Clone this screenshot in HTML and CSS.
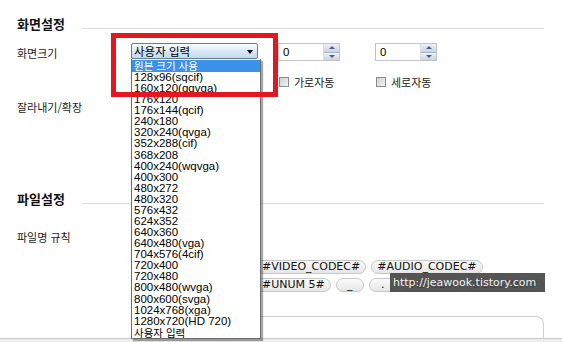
FILE: index.html
```html
<!DOCTYPE html>
<html lang="ko">
<head>
<meta charset="utf-8">
<title>화면설정</title>
<link rel="stylesheet" href="styles.css">
</head>
<body>
<div class="page">
  <section class="sec sec-screen">
    <div class="sec-head"><h2 class="sec-title">화면설정</h2><div class="sec-line"></div></div>
    <div class="row row-size">
      <div class="lbl">화면크기</div>
      <div class="size-controls">
        <div class="select-wrap">
          <div class="select"><span class="select-text">사용자 입력</span><span class="select-arrow"></span></div>
          <ul class="dropdown">
            <li class="opt ko sel">원본 크기 사용</li>
            <li class="opt">128x96(sqcif)</li>
            <li class="opt">160x120(qqvga)</li>
            <li class="opt">176x120</li>
            <li class="opt">176x144(qcif)</li>
            <li class="opt">240x180</li>
            <li class="opt">320x240(qvga)</li>
            <li class="opt">352x288(cif)</li>
            <li class="opt">368x208</li>
            <li class="opt">400x240(wqvga)</li>
            <li class="opt">400x300</li>
            <li class="opt">480x272</li>
            <li class="opt">480x320</li>
            <li class="opt">576x432</li>
            <li class="opt">624x352</li>
            <li class="opt">640x360</li>
            <li class="opt">640x480(vga)</li>
            <li class="opt">704x576(4cif)</li>
            <li class="opt">720x400</li>
            <li class="opt">720x480</li>
            <li class="opt">800x480(wvga)</li>
            <li class="opt">800x600(svga)</li>
            <li class="opt">1024x768(xga)</li>
            <li class="opt">1280x720(HD 720)</li>
            <li class="opt ko">사용자 입력</li>
          </ul>
        </div>
        <div class="fields">
          <div class="spins">
            <div class="spin"><span class="spin-val">0</span><span class="spin-btn"><i class="up"></i><i class="down"></i></span></div>
            <div class="spin spin-2"><span class="spin-val">0</span><span class="spin-btn"><i class="up"></i><i class="down"></i></span></div>
          </div>
          <div class="checks">
            <label class="check"><span class="box"></span>가로자동</label>
            <label class="check"><span class="box"></span>세로자동</label>
          </div>
        </div>
        <div class="highlight-frame"></div>
      </div>
    </div>
    <div class="row row-crop">
      <div class="lbl">잘라내기/확장</div>
    </div>
  </section>
  <section class="sec sec-file">
    <div class="sec-head"><h2 class="sec-title">파일설정</h2><div class="sec-line"></div></div>
    <div class="row row-name">
      <div class="lbl">파일명 규칙</div>
    </div>
    <div class="chips">
      <div class="chip-row">
        <span class="chip">#VIDEO_CODEC#</span>
        <span class="chip">#AUDIO_CODEC#</span>
      </div>
      <div class="chip-row">
        <span class="chip">#UNUM 5#</span>
        <span class="chip chip-wide">_</span>
        <span class="chip chip-wide">.</span>
        <span class="chip">#DATE#</span>
        <span class="chip">#CUSTOM#</span>
      </div>
      <div class="watermark">http://jeawook.tistory.com</div>
    </div>
    <div class="name-box"></div>
  </section>
</div>
<div class="footer-bar"></div>
</body>
</html>
```
FILE: styles.css
```css
* { box-sizing: border-box; margin: 0; padding: 0; }
html, body { width: 562px; height: 342px; overflow: hidden; }
body {
  background: #fff;
  font-family: "Noto Sans CJK KR", sans-serif;
  font-size: 11px;
  color: #1a1a1a;
  display: grid;
  grid-template-rows: 338px 4px;
}
.page { padding: 17px 19px 0 17px; position: relative; z-index: 1; min-height: 0; }

.sec-head { display: flex; height: 14px; line-height: 14px; }
.sec-title { font-size: 13px; font-weight: bold; width: 65px; color: #111; }
.sec-line { flex: 1; height: 1px; background: #dedede; margin-top: 11px; }

.row { display: flex; }
.lbl { width: 114px; line-height: 14px; }

.row-size { margin-top: 12px; }
.row-size .lbl { padding-top: 3px; }
.size-controls { position: relative; display: flex; }

.select-wrap { position: relative; width: 127px; }
.select {
  height: 16px;
  border: 1px solid #5f7f9e;
  border-radius: 2px;
  background: linear-gradient(#fafdff, #d6e7f5 55%, #c3dbef);
  display: flex;
  align-items: center;
  padding-left: 2px;
}
.select-text { flex: 1; font-size: 11.5px; line-height: 14px; color: #000; }
.select-arrow {
  width: 0; height: 0;
  border-left: 3.5px solid transparent;
  border-right: 3.5px solid transparent;
  border-top: 4px solid #111;
  margin-right: 4px;
  margin-top: 1px;
}
.dropdown {
  position: absolute;
  top: 16px;
  left: 0;
  width: 130px;
  height: 280px;
  list-style: none;
  background: #fff;
  border: 1px solid #6d6d6d;
  border-top: none;
  box-shadow: 2px 2px 1px rgba(0,0,0,0.35);
  padding-top: 1px;
  z-index: 2;
  font-family: "Liberation Sans", "Noto Sans CJK KR", sans-serif;
  font-size: 11.5px;
  color: #000;
}
.opt { height: 11.08px; line-height: 11.08px; padding-left: 2px; white-space: nowrap; }
.opt.ko { font-family: "Noto Sans CJK KR", sans-serif; font-size: 10.5px; }
.opt.sel { height: 12px; line-height: 12px; background: #3a92ea; color: #fff; }

.fields { margin-left: 20px; }
.spins { display: flex; }
.spin {
  width: 62px; height: 18px;
  border: 1px solid #c3c3c3;
  display: flex;
  align-items: center;
  justify-content: space-between;
  background: #fff;
}
.spin-2 { margin-left: 35px; }
.spin-val { padding-left: 4px; font-family: "Liberation Sans", sans-serif; font-size: 11.5px; color: #000; }
.spin-btn {
  width: 16px; height: 16px;
  display: flex; flex-direction: column;
  border-left: 1px solid #d8dde6;
}
.spin-btn i {
  flex: 1;
  display: flex; align-items: center; justify-content: center;
  background: linear-gradient(#eef2f8, #c9d3e3);
}
.spin-btn i.down { border-top: 1px solid #a9b4c8; }
.spin-btn i::before {
  content: "";
  width: 0; height: 0;
  border-left: 3px solid transparent;
  border-right: 3px solid transparent;
}
.spin-btn i.up::before { border-bottom: 3px solid #4d5d84; }
.spin-btn i.down::before { border-top: 3px solid #4d5d84; }

.checks { display: flex; margin-top: 14px; height: 14px; align-items: center; }
.check { display: flex; align-items: center; width: 97px; line-height: 14px; color: #1a1a1a; }
.check .box {
  width: 10px; height: 10px;
  border: 1px solid #8c8c8c;
  background: linear-gradient(135deg, #cfcfcf, #f4f4f4);
  margin-left: 1px;
  margin-right: 5px;
}

.highlight-frame {
  position: absolute;
  left: -20px; top: -10px;
  width: 167px; height: 64px;
  border: 5px solid #e4161f;
  z-index: 3;
}

.row-crop { margin-top: 11px; }

.sec-file { margin-top: 78px; }
.row-name { margin-top: 24px; }

.chips {
  position: relative;
  margin-top: 16px;
  margin-left: 239px;
  display: flex;
  flex-direction: column;
  gap: 4px;
}
.chip-row { display: flex; gap: 5px; }
.chip {
  height: 14px;
  padding: 0 5px;
  border: 1px solid #c8c8c8;
  border-radius: 7px;
  background: linear-gradient(#fafafa, #e6e6e6);
  font-family: "DejaVu Sans", sans-serif;
  font-size: 11px;
  line-height: 12px;
  color: #111;
  white-space: nowrap;
}
.chip-wide { min-width: 28px; text-align: center; }
.watermark {
  position: absolute;
  left: 134px; top: 13px;
  width: 155px; height: 19px;
  background: rgba(70,70,70,0.92);
  color: #f2f2f2;
  font-family: "DejaVu Sans", sans-serif;
  font-size: 11px;
  line-height: 19px;
  padding-left: 3px;
  white-space: nowrap;
}

.name-box {
  margin-top: 24px;
  margin-left: 114px;
  height: 22px;
  border: 1px solid #cfcfcf;
  border-bottom: none;
  border-radius: 8px 8px 0 0;
}

.footer-bar { background: #ededed; border-top: 1px solid #c9c9c9; }
```
